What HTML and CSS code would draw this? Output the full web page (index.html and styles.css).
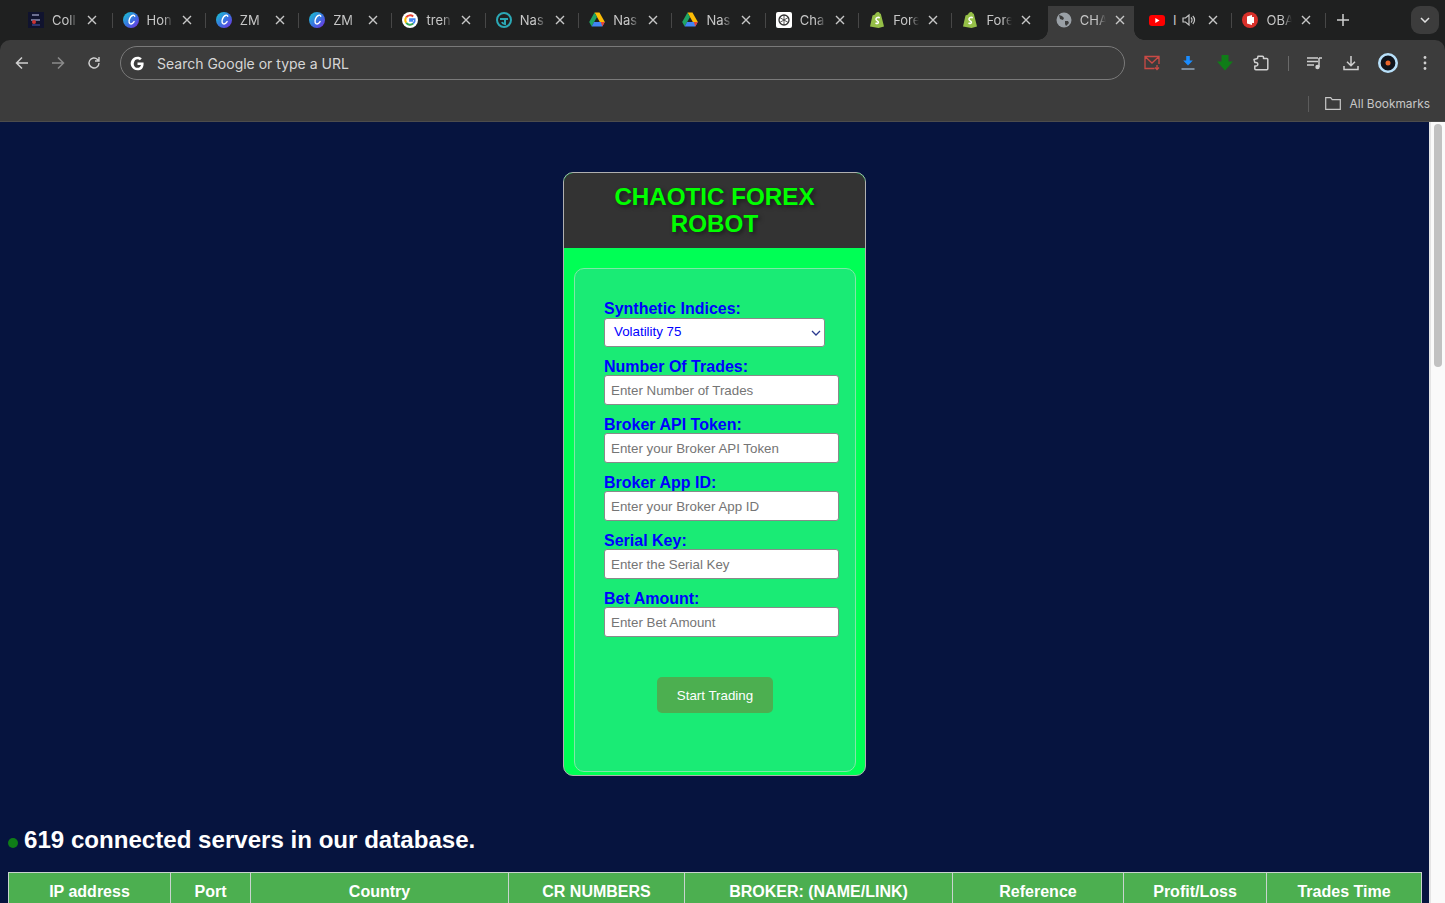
FILE: index.html
```html
<!DOCTYPE html>
<html lang="en">
<head>
<meta charset="utf-8">
<title>CHAOTIC FOREX ROBOT</title>
<link rel="stylesheet" href="styles.css">
</head>
<body>
<svg class="defs" width="0" height="0" aria-hidden="true">
  <defs>
    <linearGradient id="canvaG" x1="0" y1="0" x2="1" y2="1"><stop offset="0" stop-color="#17cbd0"/><stop offset=".55" stop-color="#3a6fe0"/><stop offset="1" stop-color="#7a2be0"/></linearGradient>
    <symbol id="canva" viewBox="0 0 16 16"><circle cx="8" cy="8" r="8" fill="url(#canvaG)"/><path d="M11.800 4.200c-.5-1.600-2.600-1.300-4.100.6-1.700 2.200-2.400 5.800-.7 6.900 1.400.8 3.200-.7 4.100-2.100" fill="none" stroke="#fff" stroke-width="1.400" stroke-linecap="round"/></symbol>
    <symbol id="gg" viewBox="0 0 16 16"><circle cx="8" cy="8" r="8" fill="#fff"/><path d="M4.200 5.400A4.700 4.700 0 0 1 11.200 4.500" fill="none" stroke="#ea4335" stroke-width="2"/><path d="M4.200 5.300a4.700 4.700 0 0 0 0 5.400" fill="none" stroke="#fbbc05" stroke-width="2"/><path d="M4.200 10.700a4.700 4.700 0 0 0 7 .9" fill="none" stroke="#34a853" stroke-width="2"/><path d="M11.200 11.600A4.700 4.700 0 0 0 12.700 7.200H8v1.700h3" fill="none" stroke="#4285f4" stroke-width="1.800"/></symbol>
    <symbol id="drive" viewBox="0 0 16 15"><path d="M5.500 0h5l5.300 9.500h-5z" fill="#fbbc05"/><path d="M5.500 0L.2 9.500l2.500 4.500 5.300-9.500z" fill="#1fa463"/><path d="M5 9.500h10.800l-2.500 4.500H2.700z" fill="#4285f4"/><path d="M13.300 14l2.500-4.500h-4z" fill="#ea4335"/></symbol>
    <symbol id="shop" viewBox="0 0 14 16"><path d="M2.500 3.500L5 2.500C5.500 1 6.500 0 8 0c1 0 1.500.6 1.800 1.400l1 .3L14 14.500 8.500 16 0 14.500z" fill="#95bf47"/><path d="M9.800 5.700C7.500 4.800 5.800 6 6 7.500c.2 1.500 2.500 1.500 2.400 3 0 1-1.500 1.200-2.900.5" fill="none" stroke="#fff" stroke-width="1.500"/></symbol>
    <symbol id="x" viewBox="0 0 10 10"><path d="M1 1l8 8M9 1l-8 8" stroke="#c7c7c7" stroke-width="1.400" fill="none"/></symbol>
  </defs>
</svg>

<header class="browser">
  <div class="tabstrip">
    <div class="tab tab-first"><svg class="fav" viewBox="0 0 16 16"><rect width="16" height="16" fill="#10132e"/><path d="M4 3h7M3 8h9" stroke="#8a8fb0" stroke-width="1.500"/><circle cx="6" cy="10" r="2" fill="#c33"/><path d="M4 13h8" stroke="#4a5ab0"/></svg><span class="tab-t">Coll</span><svg class="close"><use href="#x"/></svg></div>
    <div class="tab"><svg class="fav"><use href="#canva"/></svg><span class="tab-t">Hon</span><svg class="close"><use href="#x"/></svg></div>
    <div class="tab"><svg class="fav"><use href="#canva"/></svg><span class="tab-t">ZM</span><svg class="close"><use href="#x"/></svg></div>
    <div class="tab"><svg class="fav"><use href="#canva"/></svg><span class="tab-t">ZM</span><svg class="close"><use href="#x"/></svg></div>
    <div class="tab"><svg class="fav"><use href="#gg"/></svg><span class="tab-t">tren</span><svg class="close"><use href="#x"/></svg></div>
    <div class="tab"><svg class="fav" viewBox="0 0 16 16"><circle cx="8" cy="8" r="7" fill="none" stroke="#2ba8b5" stroke-width="2"/><path d="M4 7h8M9 7v5a3 3 0 0 1-3-2" fill="none" stroke="#2ba8b5" stroke-width="2"/></svg><span class="tab-t">Nas</span><svg class="close"><use href="#x"/></svg></div>
    <div class="tab"><svg class="fav"><use href="#drive"/></svg><span class="tab-t">Nas</span><svg class="close"><use href="#x"/></svg></div>
    <div class="tab"><svg class="fav"><use href="#drive"/></svg><span class="tab-t">Nas</span><svg class="close"><use href="#x"/></svg></div>
    <div class="tab"><svg class="fav" viewBox="0 0 16 16"><rect width="16" height="16" rx="2" fill="#fff"/><circle cx="8" cy="8" r="5" fill="none" stroke="#333" stroke-width="1.300"/><path d="M8 3v10M3.700 5.500l8.600 5M12.300 5.500l-8.600 5" stroke="#333" stroke-width=".8"/></svg><span class="tab-t">Cha</span><svg class="close"><use href="#x"/></svg></div>
    <div class="tab"><svg class="fav"><use href="#shop"/></svg><span class="tab-t">Fore</span><svg class="close"><use href="#x"/></svg></div>
    <div class="tab tab-nosep"><svg class="fav"><use href="#shop"/></svg><span class="tab-t">Fore</span><svg class="close"><use href="#x"/></svg></div>
    <div class="tab tab-active"><svg class="fav" viewBox="0 0 16 16"><circle cx="8" cy="8" r="7.500" fill="#9aa0a6"/><path d="M3 3l3 1 2 2-1 2-3-1zM9 9l3 0 1 2-3 3-1-2z" fill="#3c3c3c"/></svg><span class="tab-t">CHA</span><svg class="close"><use href="#x"/></svg></div>
    <div class="tab tab-yt"><svg class="fav yt" viewBox="0 0 16 11"><rect width="16" height="11" rx="3" fill="#f00"/><path d="M6.300 3v5l4.200-2.500z" fill="#fff"/></svg><span class="tab-t tab-t-s">I</span><svg class="speaker" viewBox="0 0 14 14"><path d="M1 5h2.500L7 2v10L3.500 9H1z" fill="none" stroke="#c7c7c7" stroke-width="1.200"/><path d="M9 4.500a3.500 3.500 0 0 1 0 5M10.800 3a5.500 5.500 0 0 1 0 8" fill="none" stroke="#c7c7c7" stroke-width="1.200"/></svg><svg class="close"><use href="#x"/></svg></div>
    <div class="tab"><svg class="fav" viewBox="0 0 16 16"><circle cx="8" cy="8" r="8" fill="#d9302a"/><path d="M5 4.500l5-1.500v10l-5-1.500zM10 5h2v6h-2" fill="#fff"/></svg><span class="tab-t">OBA</span><svg class="close"><use href="#x"/></svg></div>
    <svg class="newtab" viewBox="0 0 12 12"><path d="M6 0v12M0 6h12" stroke="#d0d0d0" stroke-width="1.500"/></svg>
    <div class="tab-search"><svg viewBox="0 0 10 6" width="10" height="6"><path d="M1 1l4 4 4-4" fill="none" stroke="#e0e0e0" stroke-width="1.500"/></svg></div>
  </div>
  <div class="toolbar">
    <svg class="nav" viewBox="0 0 14 14"><path d="M13 7H2M7 1.500L1.500 7 7 12.500" fill="none" stroke="#d0d0d0" stroke-width="1.500"/></svg>
    <svg class="nav" viewBox="0 0 14 14"><path d="M1 7h11M7 1.500L12.500 7 7 12.500" fill="none" stroke="#8b8b8b" stroke-width="1.500"/></svg>
    <svg class="nav" viewBox="0 0 14 14"><path d="M12 7a5 5 0 1 1-1.500-3.600L12 5M12 1v4H8" fill="none" stroke="#d0d0d0" stroke-width="1.400"/></svg>
    <div class="omnibox">
      <svg class="g" viewBox="0 0 16 16"><path d="M14.500 8.200c0-.5 0-1-.1-1.400H8v2.800h3.700c-.2 1-.7 1.700-1.500 2.300-.6.400-1.300.7-2.200.7-1.800 0-3.300-1.200-3.800-2.800-.1-.4-.2-.9-.2-1.300 0-.5.100-.9.200-1.300C4.700 4.600 6.200 3.400 8 3.400c1 0 1.900.3 2.600 1l2-2C11.500 1.300 9.900.7 8 .7 5.100.7 2.700 2.300 1.500 4.700 1 5.700.7 6.800.7 8s.3 2.300.8 3.300c1.200 2.400 3.600 4 6.500 4 1.900 0 3.600-.6 4.800-1.800 1.100-1.200 1.700-3 1.700-5.300z" fill="#fff"/></svg>
      <span class="omni-text">Search Google or type a URL</span>
    </div>
    <div class="ext-icons">
      <svg class="ext" viewBox="0 0 16 16"><path d="M10.500 13.500H1v-12h14V9M1 1.500L8 8l7-6.500M13 10v4.500M11 12.500l2 2 2-2" fill="none" stroke="#c94a45" stroke-width="1.300"/></svg>
      <svg class="ext" viewBox="0 0 16 16"><path d="M6.200 1h3.600v4.500h3L8 10.500 3.200 5.500h3z" fill="#1a8cff"/><rect x="1.500" y="13" width="13" height="2" fill="#7d8b99"/></svg>
      <svg class="ext" viewBox="0 0 16 16"><path d="M4.500 0h7v6.500H16L8 15.500 0 6.500h4.500z" fill="#0f7d17"/></svg>
      <svg class="ext" viewBox="0 0 16 16"><path d="M5 1.200h4.500a1 1 0 0 1 1 1V3.500h3.300a1 1 0 0 1 1 1v9.300a1 1 0 0 1-1 1H2.800a1 1 0 0 1-1-1V11H3a1.800 1.800 0 0 0 0-3.600H1.800L1 4.500 4.500 3.500z" fill="none" stroke="#d0d0d0" stroke-width="1.500" stroke-linejoin="round"/></svg>
      <span class="tool-sep"></span>
      <svg class="ext" viewBox="0 0 16 16"><path d="M0 3h11M0 6.500h11M0 10h7" stroke="#d0d0d0" stroke-width="1.500"/><path d="M12 3v9" stroke="#d0d0d0" stroke-width="1.500"/><circle cx="10.500" cy="12" r="2.200" fill="#d0d0d0"/><path d="M12 3h3" stroke="#d0d0d0" stroke-width="1.500"/></svg>
      <svg class="ext" viewBox="0 0 16 16"><path d="M8 1v9.500M4 6.800l4 4 4-4M1 11v3.500h14V11" fill="none" stroke="#d0d0d0" stroke-width="1.500"/></svg>
      <svg class="ext avatar" viewBox="0 0 20 20"><circle cx="10" cy="10" r="8.700" fill="#10141c" stroke="#b8e0fa" stroke-width="2.600"/><circle cx="10" cy="10" r="2.500" fill="#e8642a"/></svg>
      <svg class="ext dots" viewBox="0 0 4 16"><circle cx="2" cy="2.500" r="1.400" fill="#d0d0d0"/><circle cx="2" cy="8" r="1.400" fill="#d0d0d0"/><circle cx="2" cy="13.500" r="1.400" fill="#d0d0d0"/></svg>
    </div>
  </div>
  <div class="bookmarks">
    <span class="bm-sep"></span>
    <svg class="folder" viewBox="0 0 16 13"><path d="M.7 12.300V.7h5l1.500 2h8.100v9.600z" fill="none" stroke="#c7c7c7" stroke-width="1.200"/></svg>
    <span class="bm-text">All Bookmarks</span>
  </div>
</header>

<div class="viewport">
  <main class="page">
    <section class="card">
      <h1 class="card-title">CHAOTIC FOREX ROBOT</h1>
      <div class="card-body">
        <form class="inner">
          <label class="lbl lbl-first">Synthetic Indices:</label>
          <div class="select"><span>Volatility 75</span><svg viewBox="0 0 10 6" width="10" height="6"><path d="M1 1l4 4 4-4" fill="none" stroke="#2b3a8f" stroke-width="1.300"/></svg></div>
          <label class="lbl">Number Of Trades:</label>
          <input class="field" placeholder="Enter Number of Trades">
          <label class="lbl">Broker API Token:</label>
          <input class="field" placeholder="Enter your Broker API Token">
          <label class="lbl">Broker App ID:</label>
          <input class="field" placeholder="Enter your Broker App ID">
          <label class="lbl">Serial Key:</label>
          <input class="field" placeholder="Enter the Serial Key">
          <label class="lbl">Bet Amount:</label>
          <input class="field" placeholder="Enter Bet Amount">
          <button class="start" type="button">Start Trading</button>
        </form>
      </div>
    </section>
    <h2 class="status"><span class="dot"></span>619 connected servers in our database.</h2>
    <table class="servers">
      <thead>
        <tr>
          <th class="c1">IP address</th><th class="c2">Port</th><th class="c3">Country</th><th class="c4">CR NUMBERS</th><th class="c5">BROKER: (NAME/LINK)</th><th class="c6">Reference</th><th class="c7">Profit/Loss</th><th class="c8">Trades Time</th>
        </tr>
      </thead>
    </table>
  </main>
  <div class="scrollbar"><div class="thumb"></div></div>
</div>
</body>
</html>
```
FILE: styles.css
```css
* { box-sizing: border-box; }
html, body { margin: 0; height: 903px; overflow: hidden; }
body { font-family: "Liberation Sans", Arial, sans-serif; background: #06143f; display: flex; flex-direction: column; }
.defs { position: absolute; }

.browser { height: 122px; flex: none; background: #1f2020; font-family: Inter, "Liberation Sans", sans-serif; }
.tabstrip { height: 40px; display: flex; align-items: center; padding-left: 19px; position: relative; }
.tab { width: 93.330px; height: 40px; display: flex; align-items: center; padding-left: 9px; position: relative; flex: none; }
.tab-first { width: 94.500px; }
.tab:not(.tab-active):not(.tab-nosep)::after { content: ""; position: absolute; right: 1px; top: 13px; height: 15px; width: 1px; background: #474747; }
.tab-active::before { content: ""; position: absolute; left: -9px; top: 6px; bottom: 0; width: 106px; border-radius: 10px 10px 0 0;
  background:
    radial-gradient(circle at 0 0, transparent 9.500px, #3c3c3c 10px) left bottom / 10px 10px no-repeat,
    radial-gradient(circle at 100% 0, transparent 9.500px, #3c3c3c 10px) right bottom / 10px 10px no-repeat,
    linear-gradient(#3c3c3c, #3c3c3c) center / 86px 100% no-repeat; }
.tab-active > * { position: relative; }
.fav { width: 16px; height: 16px; flex: none; display: block; }
.yt { height: 11px; }
.tab-t { width: 27px; margin-left: 8px; margin-right: 8px; color: #c7c7c7; font-size: 13px; white-space: nowrap; flex: none;
  mask-image: linear-gradient(to right, #000 62%, transparent 96%); -webkit-mask-image: linear-gradient(to right, #000 62%, transparent 96%); }
.tab-t-s { width: 6px; margin-right: 3px; mask-image: none; -webkit-mask-image: none; }
.speaker { width: 14px; height: 14px; margin-right: 12px; flex: none; }
.close { width: 10px; height: 10px; flex: none; display: block; }
.newtab { width: 12px; height: 12px; margin-left: 10px; flex: none; }
.tab-search { position: absolute; left: 1411px; top: 6px; width: 28px; height: 28px; border-radius: 9px; background: #3c3c3c; display: flex; align-items: center; justify-content: center; }

.toolbar { height: 46px; display: flex; align-items: center; padding-left: 15px; background: #3c3c3c; border-radius: 10px 10px 0 0; }
.nav { width: 14px; height: 14px; margin-right: 22px; flex: none; }
.omnibox { width: 1005px; height: 34px; border: 1px solid #7a7a7a; border-radius: 17px; margin-left: -3px; display: flex; align-items: center; padding-left: 9px; }
.g { width: 15px; height: 15px; flex: none; }
.omni-text { color: #d6d6d6; font-size: 14px; margin-left: 12px; }
.ext-icons { display: flex; align-items: center; margin-left: 19px; }
.ext { width: 16px; height: 16px; margin-right: 20.250px; flex: none; }
.tool-sep { width: 1px; height: 15px; background: #6a6a6a; margin-right: 18px; margin-left: -1px; }
.avatar { width: 20px; height: 20px; margin: 0 18px 0 -2px; }
.dots { width: 4px; margin: 0 0 0 7px; }

.bookmarks { height: 36px; display: flex; align-items: center; justify-content: flex-end; padding: 0 15px 0 0; background: #3c3c3c; border-bottom: 1px solid #4c4c4c; }
.bm-sep { width: 1px; height: 16px; background: #5c5c5c; margin-right: 16px; }
.folder { width: 16px; height: 13px; margin-right: 9px; }
.bm-text { color: #c7c7c7; font-size: 11.900px; }

.viewport { flex: 1; min-height: 0; display: flex; overflow: hidden; }
.page { flex: 1; min-width: 0; padding: 50px 8px 0; }
.scrollbar { width: 16px; flex: none; background: #fafafa; border-left: 2px solid #e4e4e4; padding: 2px 3px 0 3px; }
.thumb { height: 243px; background: #c1c1c1; border-radius: 4px; }

.card { width: 303px; height: 604px; margin: 0 auto; border: 1px solid #b0b0b0; border-radius: 10px; overflow: hidden; background: #00ff55; }
.card-title { margin: 0; background: #333; height: 75px; padding: 10px 30px 0; text-align: center; color: #00ff00; font-size: 24.200px; line-height: 27px; font-weight: 700; text-shadow: 2px 2px 4px rgba(0,0,0,.5); }
.card-body { padding: 20px 9px 3px 10px; height: 527px; }
.inner { height: 504px; border: 1px solid #7fe9a6; border-radius: 10px; background: #1aeb75; padding: 30px 0 0 29px; display: flex; flex-direction: column; align-items: flex-start; }
.lbl { color: #0000ff; font-weight: 700; font-size: 16px; line-height: 20px; height: 18px; margin-top: 1px; display: block; }
.lbl-first { line-height: 18px; }
.select { width: 221px; height: 29px; background: #fff; border: 1px solid #8a8a8a; border-radius: 3px; margin-bottom: 9px; display: flex; align-items: center; justify-content: space-between; padding: 0 3px 2px 9px; color: #0000ff; font-size: 13.333px; }
.select svg { margin-top: 2px; }
.field { width: 235px; height: 30px; border: 1px solid #8a8a8a; border-radius: 3px; background: #fff; padding: 0 6px; font-family: "Liberation Sans", Arial, sans-serif; font-size: 13.333px; margin-bottom: 9px; display: block; }
.field::placeholder { color: #757575; opacity: 1; }
.start { width: 116px; height: 36px; margin: 31px 0 0 53px; background: #4caf50; color: #fff; border: 0; border-radius: 5px; font-family: "Liberation Sans", Arial, sans-serif; font-size: 13.333px; }

.status { margin: 49px 0 17px; color: #fff; font-size: 24.100px; line-height: 30px; font-weight: 700; height: 30px; display: flex; align-items: center; }
.dot { width: 10px; height: 10px; border-radius: 50%; background: #0f7d17; margin: 6px 6px 0 0; flex: none; }
.servers { width: 1413px; table-layout: fixed; border-collapse: collapse; }
.servers th { background: #4caf50; color: #fff; border: 1px solid #c9d4cf; height: 38px; padding: 0; font-size: 16px; font-weight: 700; text-align: center; }
.c1 { width: 162px; } .c2 { width: 80px; } .c3 { width: 258px; } .c4 { width: 176px; }
.c5 { width: 268px; } .c6 { width: 171px; } .c7 { width: 143px; } .c8 { width: 155px; }
```
